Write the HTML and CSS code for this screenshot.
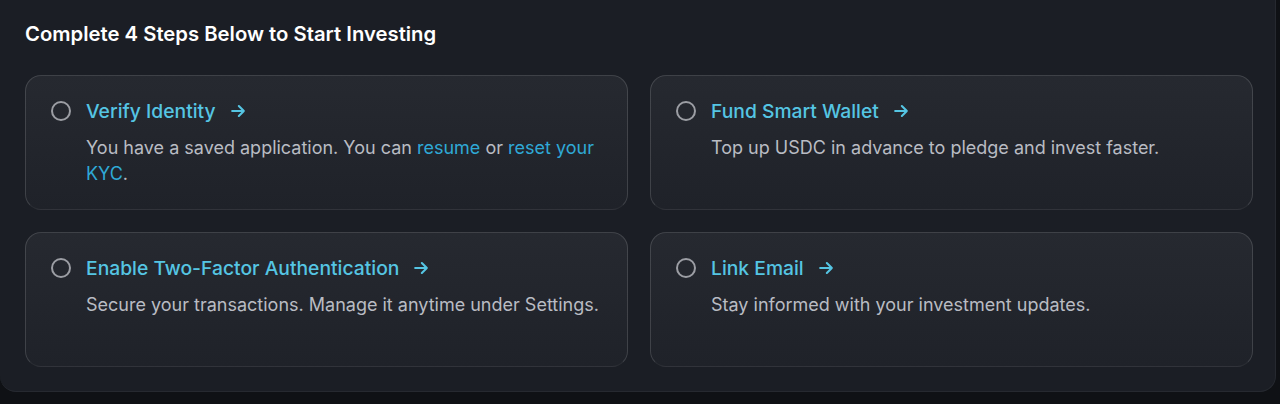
FILE: index.html
```html
<!DOCTYPE html>
<html lang="en">
<head>
<meta charset="utf-8">
<title>Steps</title>
<link rel="stylesheet" href="styles.css">
</head>
<body>
<section class="panel">
  <h2 class="panel-title">Complete 4 Steps Below to Start Investing</h2>
  <div class="grid">
    <div class="card">
      <span class="check"></span>
      <div class="body">
        <div class="step-title"><span>Verify Identity</span>
          <svg class="arrow" viewBox="0 0 24 24"><path d="M5 12h14M13 6l6 6-6 6"/></svg></div>
        <p class="desc">You have a saved application. You can <span class="link">resume</span> or <span class="link">reset your KYC</span>.</p>
      </div>
    </div>
    <div class="card">
      <span class="check"></span>
      <div class="body">
        <div class="step-title"><span>Fund Smart Wallet</span>
          <svg class="arrow" viewBox="0 0 24 24"><path d="M5 12h14M13 6l6 6-6 6"/></svg></div>
        <p class="desc">Top up USDC in advance to pledge and invest faster.</p>
      </div>
    </div>
    <div class="card">
      <span class="check"></span>
      <div class="body">
        <div class="step-title"><span>Enable Two-Factor Authentication</span>
          <svg class="arrow" viewBox="0 0 24 24"><path d="M5 12h14M13 6l6 6-6 6"/></svg></div>
        <p class="desc">Secure your transactions. Manage it anytime under Settings.</p>
      </div>
    </div>
    <div class="card">
      <span class="check"></span>
      <div class="body">
        <div class="step-title"><span>Link Email</span>
          <svg class="arrow" viewBox="0 0 24 24"><path d="M5 12h14M13 6l6 6-6 6"/></svg></div>
        <p class="desc">Stay informed with your investment updates.</p>
      </div>
    </div>
  </div>
</section>
</body>
</html>
```

FILE: styles.css
```css
html, body {
  margin: 0;
  padding: 0;
  background: #0f1115;
  font-family: Inter, "Noto Sans", sans-serif;
}

.panel {
  box-sizing: border-box;
  width: 1276px;
  height: 392px;
  background: #1b1e25;
  border: 1px solid #262930;
  border-top: none;
  border-left: none;
  border-radius: 0 0 16px 16px;
  padding: 20px 22px 24px 25px;
}

.panel-title {
  margin: 0;
  font-size: 20.3px;
  line-height: 28px;
  font-weight: 600;
  color: #ffffff;
}

.grid {
  margin-top: 27px;
  display: grid;
  grid-template-columns: 603px 603px;
  grid-template-rows: 135px 135px;
  column-gap: 22px;
  row-gap: 22px;
}

.card {
  box-sizing: border-box;
  border-radius: 16px;
  border: 1px solid rgba(255, 255, 255, 0.14);
  border-bottom-color: rgba(255, 255, 255, 0.05);
  background: linear-gradient(180deg, #262930 0%, #1f2229 100%);
  padding: 21px 22px 20px 25px;
  display: flex;
  align-items: flex-start;
  gap: 15px;
}

.check {
  flex: none;
  box-sizing: border-box;
  width: 20px;
  height: 20px;
  margin-top: 4px;
  border-radius: 50%;
  border: 2px solid #9c9ea4;
}

.body {
  flex: 1;
  min-width: 0;
}

.step-title {
  display: flex;
  align-items: center;
  gap: 12px;
  font-size: 19.3px;
  line-height: 28px;
  font-weight: 500;
  color: #55c5e3;
}

.arrow {
  width: 20px;
  height: 20px;
  fill: none;
  stroke: #55c5e3;
  stroke-width: 2.5;
  stroke-linecap: round;
  stroke-linejoin: round;
}

.desc {
  margin: 10px 0 0 0;
  font-size: 18px;
  line-height: 26px;
  color: #b9bcc3;
}

.link {
  color: #2fa9d6;
}
```
